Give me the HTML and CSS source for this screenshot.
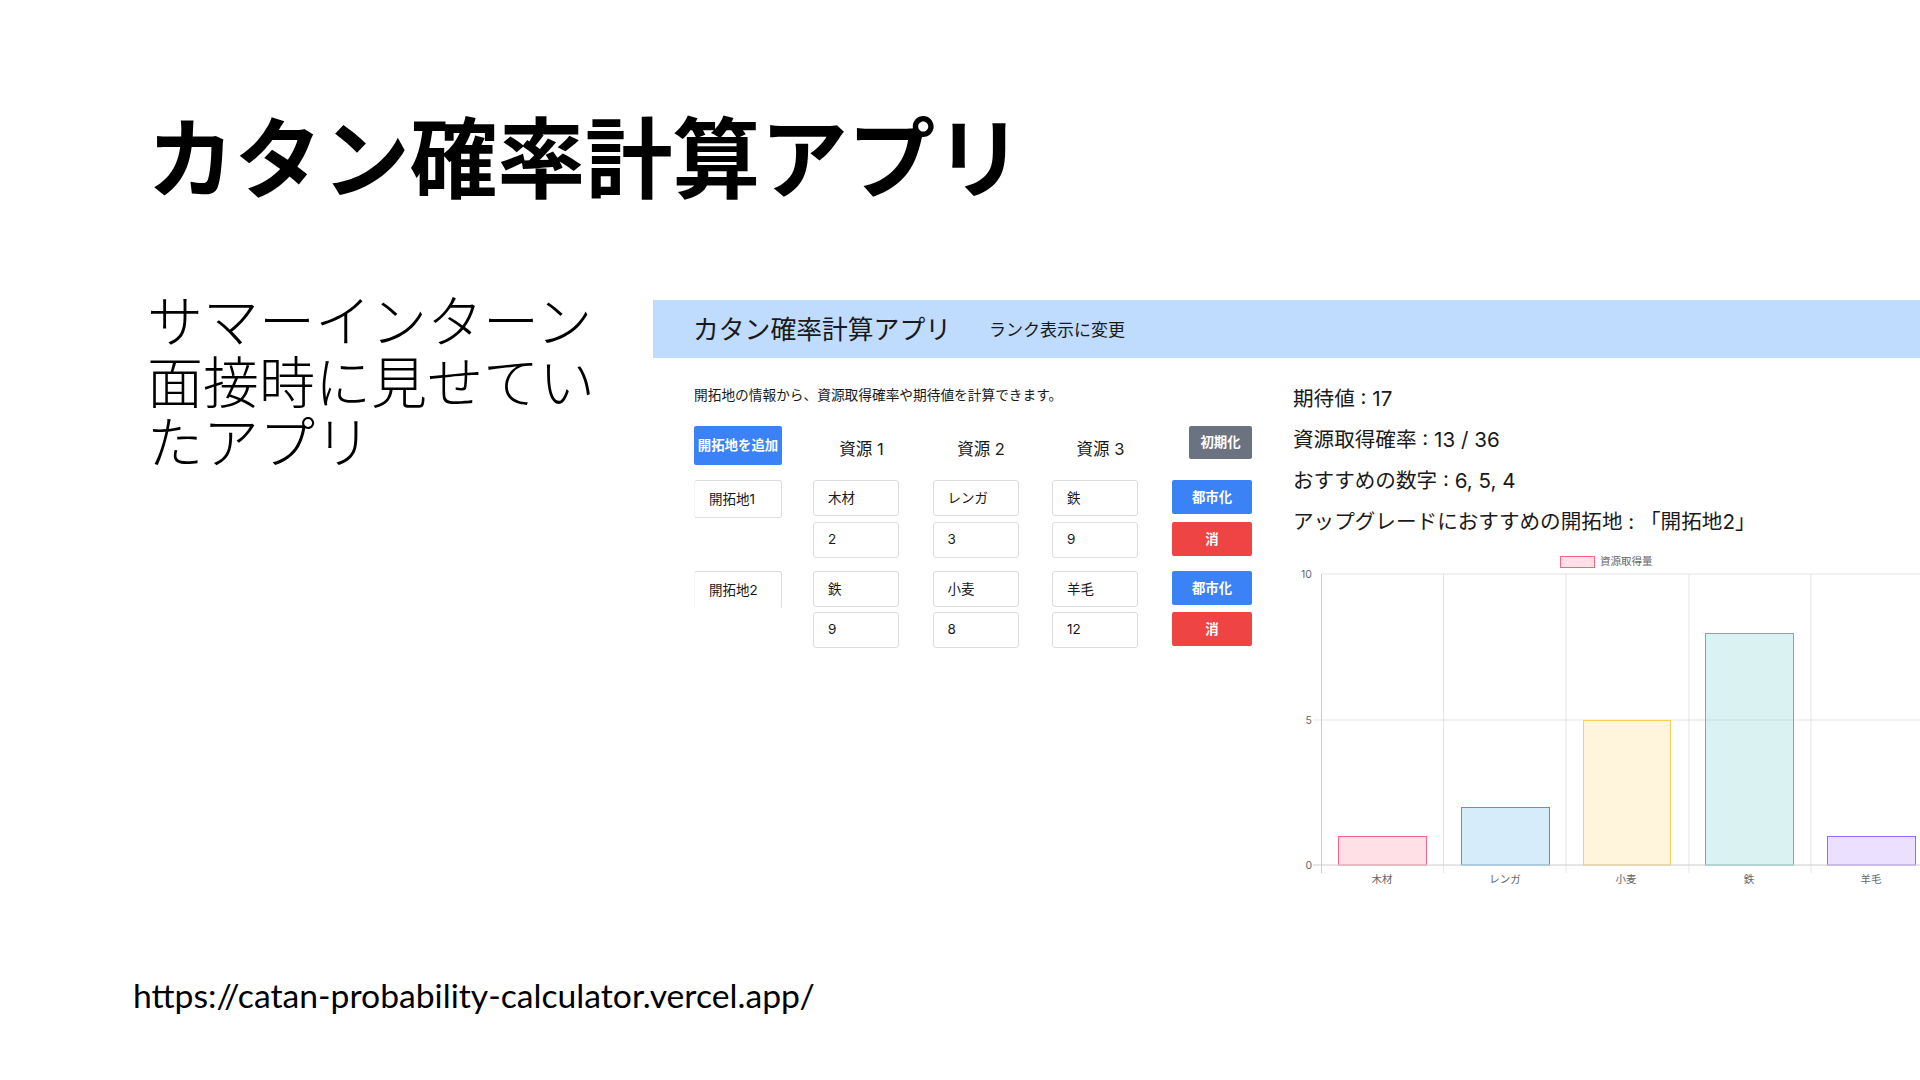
FILE: index.html
```html
<!DOCTYPE html>
<html lang="ja">
<head>
    <meta charset="UTF-8">
    <title>カタン確率計算アプリ</title>
    <link rel="stylesheet" href="styles.css">
</head>
<body>
    <main class="slide">
        <h1 class="slide-title">カタン確率計算アプリ</h1>
        <div class="slide-body">
            <p class="slide-text">サマーインターン面接時に見せていたアプリ</p>
            <section class="app">
                <header class="app-header">
                    <span class="app-title">カタン確率計算アプリ</span>
                    <span class="app-link">ランク表示に変更</span>
                </header>
                <div class="app-main">
                    <div class="app-left">
                        <p class="app-desc">開拓地の情報から、資源取得確率や期待値を計算できます。</p>
                        <div class="table">
                            <button type="button" class="btn btn-add">開拓地を追加</button>
                            <span class="head">資源 1</span>
                            <span class="head">資源 2</span>
                            <span class="head">資源 3</span>
                            <button type="button" class="btn btn-reset">初期化</button>

                            <input class="site" type="text" value="開拓地1">
                            <input class="field" type="text" value="木材">
                            <input class="field" type="text" value="レンガ">
                            <input class="field" type="text" value="鉄">
                            <button type="button" class="btn btn-city">都市化</button>

                            <span></span>
                            <input class="field" type="text" value="2">
                            <input class="field" type="text" value="3">
                            <input class="field" type="text" value="9">
                            <button type="button" class="btn btn-delete">消</button>

                            <input class="site site-cut" type="text" value="開拓地2">
                            <input class="field" type="text" value="鉄">
                            <input class="field" type="text" value="小麦">
                            <input class="field" type="text" value="羊毛">
                            <button type="button" class="btn btn-city">都市化</button>

                            <span></span>
                            <input class="field" type="text" value="9">
                            <input class="field" type="text" value="8">
                            <input class="field" type="text" value="12">
                            <button type="button" class="btn btn-delete">消</button>
                        </div>
                    </div>
                    <div class="app-right">
                        <p class="result">期待値 : 17</p>
                        <p class="result">資源取得確率 : 13 / 36</p>
                        <p class="result">おすすめの数字 : 6, 5, 4</p>
                        <p class="result">アップグレードにおすすめの開拓地 : 「開拓地2」</p>
                        <svg class="chart" viewBox="0 0 627 340" width="627" height="340">
                            <rect class="bar-pink" x="267.5" y="6.5" width="34" height="11"/>
                            <text class="legend" x="307" y="15">資源取得量</text>

                            <g class="grid">
                                <line x1="28" y1="24" x2="627" y2="24"/>
                                <line x1="20" y1="170" x2="627" y2="170"/>
                                <line x1="150.5" y1="24" x2="150.5" y2="323"/>
                                <line x1="273" y1="24" x2="273" y2="323"/>
                                <line x1="396" y1="24" x2="396" y2="323"/>
                                <line x1="518" y1="24" x2="518" y2="323"/>
                            </g>
                            <line class="axis" x1="28.5" y1="24" x2="28.5" y2="323"/>

                            <rect class="bar-pink" x="45.5" y="286.5" width="88" height="28.5"/>
                            <rect class="bar-blue" x="168.5" y="257.5" width="88" height="57.5"/>
                            <rect class="bar-yellow" x="290.5" y="170.5" width="87" height="144.5"/>
                            <rect class="bar-teal" x="412.5" y="83.5" width="88" height="231.5"/>
                            <rect class="bar-purple" x="534.5" y="286.5" width="88" height="28.5"/>
                            <line class="axis" x1="20" y1="315" x2="627" y2="315"/>

                            <text class="tick" x="19" y="28" text-anchor="end">10</text>
                            <text class="tick" x="19" y="174" text-anchor="end">5</text>
                            <text class="tick" x="19" y="319" text-anchor="end">0</text>
                            <text class="tick" x="89" y="333" text-anchor="middle">木材</text>
                            <text class="tick" x="212" y="333" text-anchor="middle">レンガ</text>
                            <text class="tick" x="333" y="333" text-anchor="middle">小麦</text>
                            <text class="tick" x="456" y="333" text-anchor="middle">鉄</text>
                            <text class="tick" x="578" y="333" text-anchor="middle">羊毛</text>
                        </svg>
                    </div>
                </div>
            </section>
        </div>
        <p class="slide-url">https://catan-probability-calculator.vercel.app/</p>
    </main>
</body>
</html>
```

FILE: styles.css
```css
*{
    margin: 0;
    padding: 0;
    box-sizing: border-box;
}

body{
    background-color: #fff;
    color: #000;
    font-family: "Noto Sans CJK JP", sans-serif;
    overflow: hidden;
}

.slide {
    width: 1920px;
    height: 1080px;
    overflow: hidden;
    display: flex;
    flex-direction: column;
}

.slide-title {
    font-size: 87.6px;
    font-weight: 700;
    line-height: 100px;
    margin: 103px 0 0 147px;
}

.slide-body {
    display: flex;
    align-items: flex-start;
    margin-top: 97px;
}

.slide-text {
    flex: none;
    width: 653px;
    padding: 0 55px 0 147px;
    margin-top: -12px;
    font-size: 56px;
    font-weight: 300;
    line-height: 60.5px;
}

.slide-url {
    font-family: Lato, sans-serif;
    font-size: 33.7px;
    line-height: 44px;
    margin: auto 0 63px 133px;
}

/* app screenshot */
.app {
    flex: none;
    width: 1267px;
    font-family: Inter, "Noto Sans CJK JP", sans-serif;
    color: #1a1a1a;
}

.app-header {
    height: 58px;
    background-color: #bfdbfe;
    display: flex;
    align-items: center;
    padding: 0 0 4px 40px;
}

.app-title {
    font-size: 25.8px;
    width: 296px;
}

.app-link {
    font-size: 17px;
    padding-top: 2px;
}

.app-main {
    display: flex;
    padding: 28px 0 0 41px;
}

.app-left {
    flex: none;
    width: 599px;
}

.app-desc {
    font-size: 13.7px;
    line-height: 18px;
    margin-bottom: 22px;
}

.table {
    display: grid;
    grid-template-columns: 119px 119.5px 119.5px 120px 80px;
    grid-template-rows: 54px 42px 49px 41px 41px;
    align-items: start;
}

.head {
    font-size: 16.5px;
    text-align: center;
    width: 85px;
    padding-top: 10px;
    margin-left: 6px;
}

.field,
.site {
    font-family: Inter, "Noto Sans CJK JP", sans-serif;
    color: #1a1a1a;
    border: 1px solid #ddd;
    border-radius: 3px;
    background-color: #fff;
    outline: none;
}

.field {
    width: 86px;
    height: 36px;
    font-size: 13.5px;
    padding: 0 0 2px 14px;
}

.site {
    width: 88px;
    height: 38px;
    font-size: 13.5px;
    padding: 0 0 2px 14px;
    border-left-color: #f4f4f4;
}

.site-cut {
    border-bottom-color: transparent;
}

.btn {
    font-family: Inter, "Noto Sans CJK JP", sans-serif;
    color: #fff;
    font-weight: 700;
    font-size: 13.4px;
    border: none;
    border-radius: 2px;
    width: 80px;
    height: 34px;
    padding-bottom: 3px;
}

.btn-add {
    width: 88px;
    height: 39px;
    padding-bottom: 4px;
    background-color: #3b82f6;
}

.btn-reset {
    width: 63px;
    height: 33px;
    margin-left: 17px;
    padding-bottom: 4px;
    background-color: #6b7280;
}

.btn-city {
    background-color: #3b82f6;
}

.btn-delete {
    background-color: #ef4444;
}

.app-right {
    flex: none;
    margin-top: -8px;
}

.result {
    font-size: 20.6px;
    line-height: 41px;
    height: 41px;
    white-space: nowrap;
}

.chart {
    display: block;
    margin-top: 8px;
}

.grid line {
    stroke: rgba(0, 0, 0, 0.1);
    stroke-width: 1;
}

.axis {
    stroke: #ccc;
    stroke-width: 1;
}

.legend,
.tick {
    font-family: Inter, "Noto Sans CJK JP", sans-serif;
    font-size: 10.5px;
    fill: #666;
}

.bar-pink { fill: rgba(255, 99, 132, 0.2); stroke: rgb(255, 99, 132); }
.bar-blue { fill: rgba(54, 162, 235, 0.2); stroke: rgb(54, 162, 235); }
.bar-yellow { fill: rgba(255, 206, 86, 0.2); stroke: rgb(255, 206, 86); }
.bar-teal { fill: rgba(75, 192, 192, 0.2); stroke: rgb(75, 192, 192); }
.bar-purple { fill: rgba(153, 102, 255, 0.2); stroke: rgb(153, 102, 255); }
```
